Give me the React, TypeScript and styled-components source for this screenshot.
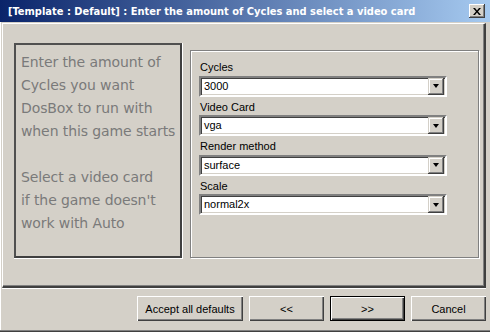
import React from 'react';
import styled, { createGlobalStyle } from 'styled-components';

const GlobalStyle = createGlobalStyle`
  html, body {
    margin: 0;
    padding: 0;
    background: #d4d0c8;
  }
  * {
    box-sizing: border-box;
  }
`;

const Window = styled.div`
  width: 490px;
  height: 332px;
  display: flex;
  flex-direction: column;
  background: #d4d0c8;
  font-family: 'Liberation Sans', Arial, sans-serif;
  font-size: 11px;
  color: #000;
  border-bottom: 1px solid #404040;
  overflow: hidden;
`;

const TitleBar = styled.div`
  height: 22px;
  flex: none;
  display: flex;
  align-items: center;
  justify-content: space-between;
  padding: 0 5px 0 8px;
  background: linear-gradient(to right, #0a246a, #a6caf0);
`;

const Title = styled.span`
  color: #fff;
  font-family: 'DejaVu Sans Condensed', 'DejaVu Sans', sans-serif;
  font-weight: bold;
  font-size: 11px;
  white-space: nowrap;
`;

const CloseButton = styled.div`
  width: 16px;
  height: 14px;
  background: #d4d0c8;
  box-shadow: inset -1px -1px #404040, inset 1px 1px #fff, inset -2px -2px #808080;
  display: flex;
  align-items: center;
  justify-content: center;
`;

const Body = styled.div`
  flex: 1;
  display: flex;
  flex-direction: column;
  padding: 1px 4px 2px 1px;
  box-shadow: inset 1px 0 #fff;
  border-bottom: 1px solid #808080;
`;

const Panel = styled.div`
  height: 265px;
  flex: none;
  display: flex;
  align-items: flex-end;
  gap: 7px;
  padding: 0 4px 27px 11px;
  margin-left: 1px;
  border-top: 1px solid #fff;
  border-left: 1px solid #fff;
  border-right: 2px solid #404040;
  border-bottom: 2px solid #404040;
  box-shadow: inset -1px -1px #808080;
`;

const HelpFrame = styled.div`
  width: 169px;
  height: 216px;
  border-right: 1px solid #fff;
  border-bottom: 1px solid #fff;
`;

const HelpBox = styled.div`
  height: 100%;
  border: 2px solid #404040;
  border-top-color: #505050;
  border-left-color: #505050;
  padding: 6px 0 0 5px;
  color: #7a7a7a;
  font-family: 'DejaVu Sans', sans-serif;
  font-size: 14px;
  letter-spacing: -0.1px;
  line-height: 23px;
  white-space: pre;
`;

const GroupBox = styled.div`
  width: 289px;
  height: 208px;
  margin-bottom: 1px;
  border: 1px solid #808080;
  box-shadow: inset 1px 1px #fff, 1px 1px #fff;
  padding: 6px 0 0 8px;
  display: flex;
  flex-direction: column;
`;

const Field = styled.div`
  display: flex;
  flex-direction: column;
`;

const Label = styled.div`
  height: 18.5px;
  line-height: 20px;
  padding-left: 1px;
`;

const Combo = styled.div`
  width: 248px;
  height: 21px;
  background: #fff;
  border: 2px solid;
  border-color: #808080 #fff #fff #808080;
  box-shadow: inset 1px 1px #404040, inset -1px -1px #d4d0c8;
  display: flex;
  align-items: center;
  justify-content: space-between;
  padding: 1px 1px 1px 3px;
`;

const ComboValue = styled.span`
  line-height: 15px;
`;

const DropButton = styled.div`
  width: 16px;
  height: 17px;
  background: #d4d0c8;
  box-shadow: inset -1px -1px #404040, inset 1px 1px #d4d0c8, inset -2px -2px #808080, inset 2px 2px #fff;
  display: flex;
  align-items: center;
  justify-content: center;
`;

const Arrow = styled.div`
  width: 0;
  height: 0;
  border-left: 3.5px solid transparent;
  border-right: 3.5px solid transparent;
  border-top: 4px solid #000;
`;

const Footer = styled.div`
  flex: 1;
  display: flex;
  justify-content: flex-end;
  align-items: flex-start;
  gap: 6px;
  padding-top: 7px;
  border-top: 1px solid #fff;
  margin-left: 1px;
`;

const Button = styled.div<{ $wide?: boolean; $default?: boolean }>`
  width: ${(p) => (p.$wide ? '106px' : '75px')};
  height: 25px;
  display: flex;
  align-items: center;
  justify-content: center;
  background: #d4d0c8;
  border: ${(p) => (p.$default ? '1px solid #000' : 'none')};
  box-shadow: inset 1px 1px #fff, inset -1px -1px #404040, inset -2px -2px #808080;
  font-size: 11px;
`;

const fields = [
  { label: 'Cycles', value: '3000' },
  { label: 'Video Card', value: 'vga' },
  { label: 'Render method', value: 'surface' },
  { label: 'Scale', value: 'normal2x' },
];

const helpText =
  'Enter the amount of\nCycles you want\nDosBox to run with\nwhen this game starts\n\nSelect a video card\nif the game doesn\'t\nwork with Auto';

export default function App() {
  return (
    <>
      <GlobalStyle />
      <Window>
        <TitleBar>
          <Title>[Template : Default] : Enter the amount of Cycles and select a video card</Title>
          <CloseButton>
            <svg width="8" height="7" viewBox="0 0 8 7">
              <path d="M0 0h2l2 2.5L6 0h2L5 3.5 8 7H6L4 4.5 2 7H0l3-3.5z" fill="#000" />
            </svg>
          </CloseButton>
        </TitleBar>
        <Body>
          <Panel>
            <HelpFrame>
              <HelpBox>{helpText}</HelpBox>
            </HelpFrame>
            <GroupBox>
              {fields.map((f) => (
                <Field key={f.label}>
                  <Label>{f.label}</Label>
                  <Combo>
                    <ComboValue>{f.value}</ComboValue>
                    <DropButton>
                      <Arrow />
                    </DropButton>
                  </Combo>
                </Field>
              ))}
            </GroupBox>
          </Panel>
          <Footer>
            <Button $wide>Accept all defaults</Button>
            <Button>&lt;&lt;</Button>
            <Button $default>&gt;&gt;</Button>
            <Button>Cancel</Button>
          </Footer>
        </Body>
      </Window>
    </>
  );
}
